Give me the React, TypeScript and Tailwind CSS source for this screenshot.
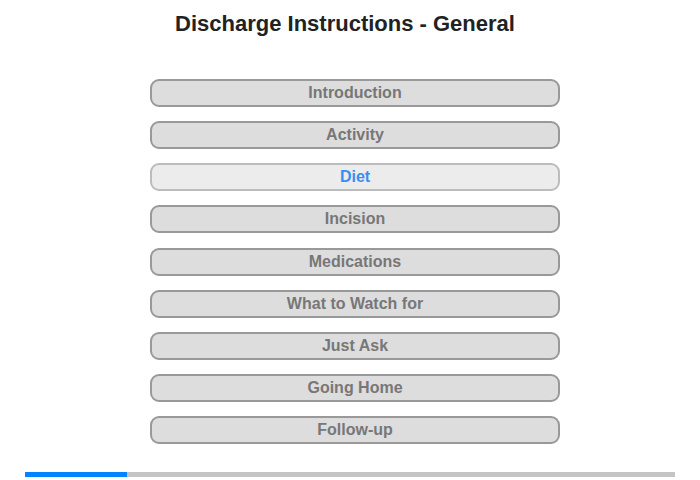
const SECTIONS = [
  "Introduction",
  "Activity",
  "Diet",
  "Incision",
  "Medications",
  "What to Watch for",
  "Just Ask",
  "Going Home",
  "Follow-up",
];

const ACTIVE = "Diet";

export default function App() {
  return (
    <div className="w-[700px] h-[480px] bg-white font-['Liberation_Sans',Arial,sans-serif] flex flex-col">
      {/* header */}
      <h1 className="pt-[11px] pr-[10px] h-[79px] text-center text-[22px] leading-[26px] font-bold text-[#222]">
        Discharge Instructions - General
      </h1>

      {/* menu */}
      <div className="pl-[10px] flex flex-col items-center gap-[14.15px]">
        {SECTIONS.map((s) => {
          const active = s === ACTIVE;
          return (
            <button
              key={s}
              className={
                active
                  ? "w-[410px] h-[28px] rounded-[9px] border-2 border-[#bcbcbc] bg-[#ececec] text-[16px] leading-[24px] font-bold text-[#3b8ef0]"
                  : "w-[410px] h-[28px] rounded-[9px] border-2 border-[#999] bg-[#dddddd] text-[16px] leading-[24px] font-bold text-[#777]"
              }
            >
              {s}
            </button>
          );
        })}
      </div>

      {/* progress */}
      <div className="mt-[28px] mx-[25px] h-[5px] bg-[#c4c4c4] flex">
        <div className="w-[102px] h-full bg-[#0084ff]" />
      </div>
    </div>
  );
}
